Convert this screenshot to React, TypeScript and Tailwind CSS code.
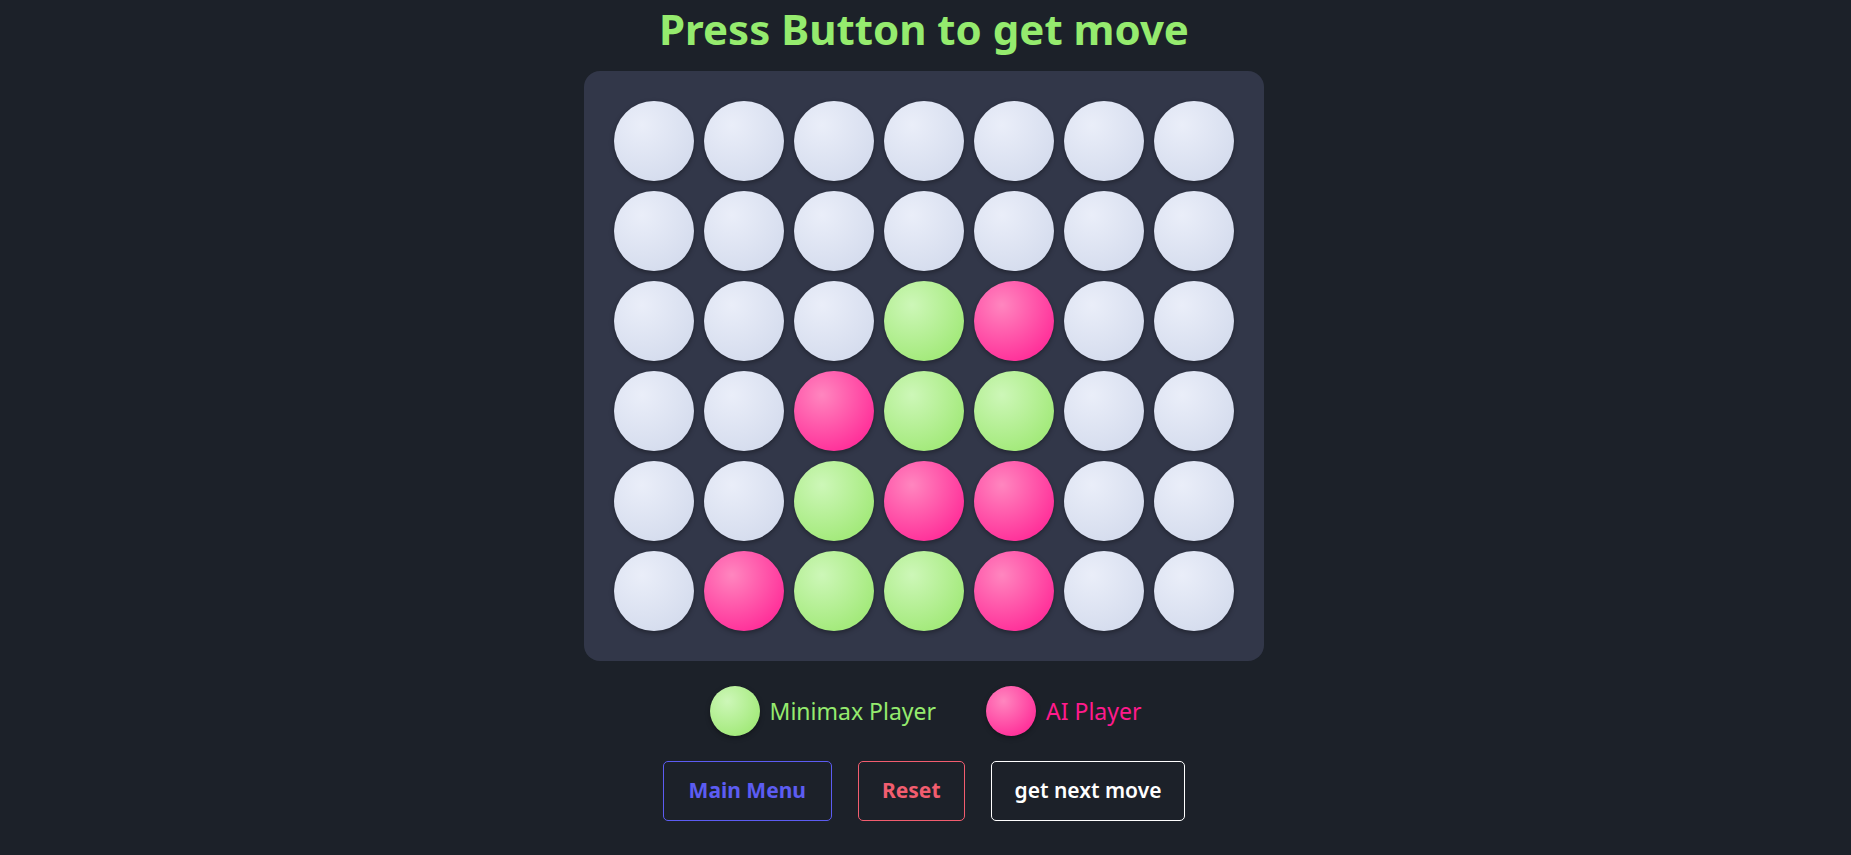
const board: number[][] = [
  [0, 0, 0, 0, 0, 0, 0],
  [0, 0, 0, 0, 0, 0, 0],
  [0, 0, 0, 1, 2, 0, 0],
  [0, 0, 2, 1, 1, 0, 0],
  [0, 0, 1, 2, 2, 0, 0],
  [0, 2, 1, 1, 2, 0, 0],
];

const cellClass: Record<number, string> = {
  0: "bg-[radial-gradient(circle_at_35%_30%,#eaeef9,#d6ddee_75%)]",
  1: "bg-[radial-gradient(circle_at_35%_30%,#cdf7b8,#a4ea7c_75%)]",
  2: "bg-[radial-gradient(circle_at_35%_30%,#ff86bf,#ff2d98_80%)]",
};

const Disc = ({ kind, size }: { kind: number; size: string }) => (
  <div className={`${size} rounded-full shadow-[0_2px_5px_rgba(0,0,0,0.35)] ${cellClass[kind]}`} />
);

const App = () => {
  return (
    <div
      className="min-h-[855px] w-full bg-[#1c2129] flex flex-col items-center"
      style={{ fontFamily: '"Noto Sans", "Open Sans", sans-serif' }}
    >
      {/* TITLE */}
      <h1 className="text-[42px] leading-[58px] font-bold text-[#95eb6e] mr-[3px]">Press Button to get move</h1>

      {/* BOARD */}
      <div className="mt-[13px] mr-[3px] bg-[#323749] rounded-2xl p-[30px] grid grid-cols-7 gap-[10px]">
        {board.flat().map((cell, index) => (
          <Disc key={index} kind={cell} size="w-20 h-20" />
        ))}
      </div>

      {/* LEGEND */}
      <div className="mt-[25px] flex flex-row items-center">
        <div className="flex flex-row items-center gap-[10px]">
          <Disc kind={1} size="w-[50px] h-[50px]" />
          <span className="text-[23px] text-[#95eb6e]">Minimax Player</span>
        </div>
        <div className="flex flex-row items-center gap-[10px] ml-[50px]">
          <Disc kind={2} size="w-[50px] h-[50px]" />
          <span className="text-[23px] text-[#ff1a8c]">AI Player</span>
        </div>
      </div>

      {/* BUTTONS */}
      <div className="mt-[25px] flex flex-row gap-[26px] mr-[3px]">
        <button className="h-[60px] px-[25px] border border-[#5c5cf2] rounded-[5px] text-[#5c5cf2] text-[21px] font-bold">
          Main Menu
        </button>
        <button className="h-[60px] px-[23px] border border-[#f25d6f] rounded-[5px] text-[#f25d6f] text-[21px] font-bold">
          Reset
        </button>
        <button className="h-[60px] px-[23px] border border-white rounded-[5px] text-white text-[21px] font-semibold">
          get next move
        </button>
      </div>
    </div>
  );
};

export default App;
